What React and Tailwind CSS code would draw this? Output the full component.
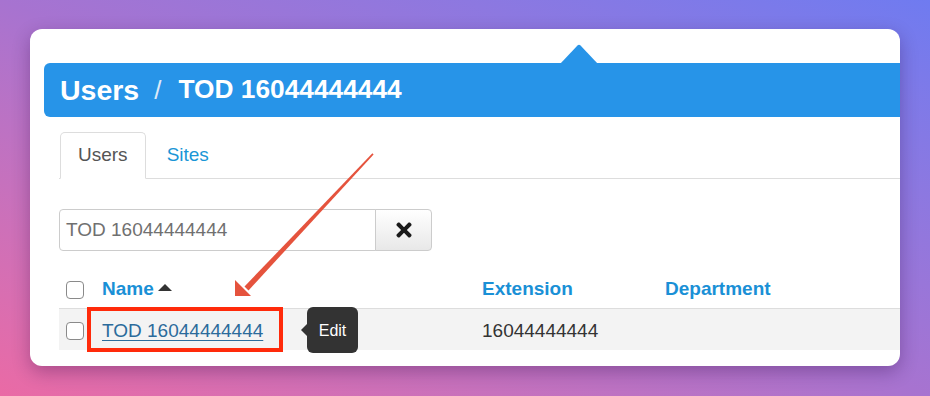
import { FaTimes } from 'react-icons/fa';

const Checkbox = () => (
  <div className="w-[18px] h-[18px] rounded-[4px] border border-[#8a8a8a] bg-white" />
);

const App = () => {
  return (
    <div className="w-[930px] h-[396px] overflow-hidden pt-[29px] pl-[30px] bg-linear-to-tr from-[#ea6aa5] via-[#a773d0] to-[#6f7bf0]" style={{ fontFamily: '"Liberation Sans", Arial, sans-serif' }}>
      <div className="relative w-[870px] h-[337px] rounded-[12px] bg-white overflow-hidden shadow-[0_6px_18px_rgba(40,0,60,0.3)]">
        {/* header bar */}
        <div className="pt-[34px] pl-[14px]">
          <div className="h-[54px] rounded-l-[6px] bg-[#2794e8] flex items-center pl-[16px] text-white font-bold text-[28.5px]">
            <span>Users</span>
            <span className="ml-[15px] mr-[17px] font-normal text-[26px] text-[#dceaf8]">/</span>
            <span className="text-[26.3px]">TOD 16044444444</span>
          </div>
        </div>
        <svg className="absolute left-[530px] top-[15px]" width="38" height="20" viewBox="0 0 38 20">
          <path d="M0 20 L17.5 1.5 Q19 0 20.5 1.5 L38 20 Z" fill="#2794e8" />
        </svg>

        <div className="pl-[29px]">
          {/* tabs */}
          <div className="mt-[15px] flex h-[47px] border-b border-[#dddddd] text-[19px]">
            <div className="ml-px -mb-px px-[17px] flex items-center bg-white border border-[#dddddd] border-b-white rounded-t-[5px] text-[#555555]">Users</div>
            <div className="px-[21px] flex items-center text-[#1a96d6]">Sites</div>
          </div>

          {/* search */}
          <div className="mt-[30px] flex h-[42px]">
            <div className="w-[317px] border border-[#cccccc] rounded-l-[4px] flex items-center pl-[6px] text-[19px] text-[#707070]">TOD 16044444444</div>
            <div className="w-[57px] -ml-px border border-[#cccccc] rounded-r-[4px] bg-linear-to-b from-white to-[#e8e8e8] flex items-center justify-center">
              <FaTimes className="w-[22px] h-[22px] text-[#1a1a1a]" />
            </div>
          </div>

          {/* table */}
          <div className="mt-[20px] text-[19px]">
            <div className="h-[38px] flex items-center border-b border-[#dddddd] font-bold text-[#1a90d6]">
              <div className="w-[43px] pl-[7px]"><Checkbox /></div>
              <div className="w-[380px] flex items-center">
                Name
                <svg className="ml-[4px] -mt-[4px]" width="14" height="7" viewBox="0 0 14 7"><path d="M0 7 L7 0 L14 7 Z" fill="#333" /></svg>
              </div>
              <div className="w-[183px]">Extension</div>
              <div>Department</div>
            </div>
            <div className="h-[41px] flex items-center bg-[#f3f3f3] pt-[3px]">
              <div className="w-[43px] pl-[7px]"><Checkbox /></div>
              <div className="w-[380px] text-[#2b6b9b] underline underline-offset-[3px]">TOD 16044444444</div>
              <div className="w-[183px] text-[#333333]">16044444444</div>
            </div>
          </div>
        </div>

        {/* annotation overlays */}
        <div className="absolute left-[57px] top-[278px] w-[196px] h-[45px] border-[4px] border-[#ff2a0a]" />
        <div className="absolute left-[277px] top-[278px] w-[51px] h-[46px] rounded-[6px] bg-[#333333] flex items-center justify-center text-white text-[16px] pt-[2px]">
          Edit
          <div className="absolute -left-[6px] top-[17px] w-0 h-0 border-y-[6px] border-y-transparent border-r-[6px] border-r-[#333333]" />
        </div>
        <svg className="absolute left-0 top-0" width="870" height="337" viewBox="0 0 870 337">
          <path d="M342.4 124.2 L343.6 125.4 L218.5 261.5 L214.5 257.5 Z" fill="#e5533d" />
          <path d="M205 267 L205 251 L221 267 Z" fill="#e5533d" />
        </svg>
      </div>
    </div>
  );
};

export default App;
